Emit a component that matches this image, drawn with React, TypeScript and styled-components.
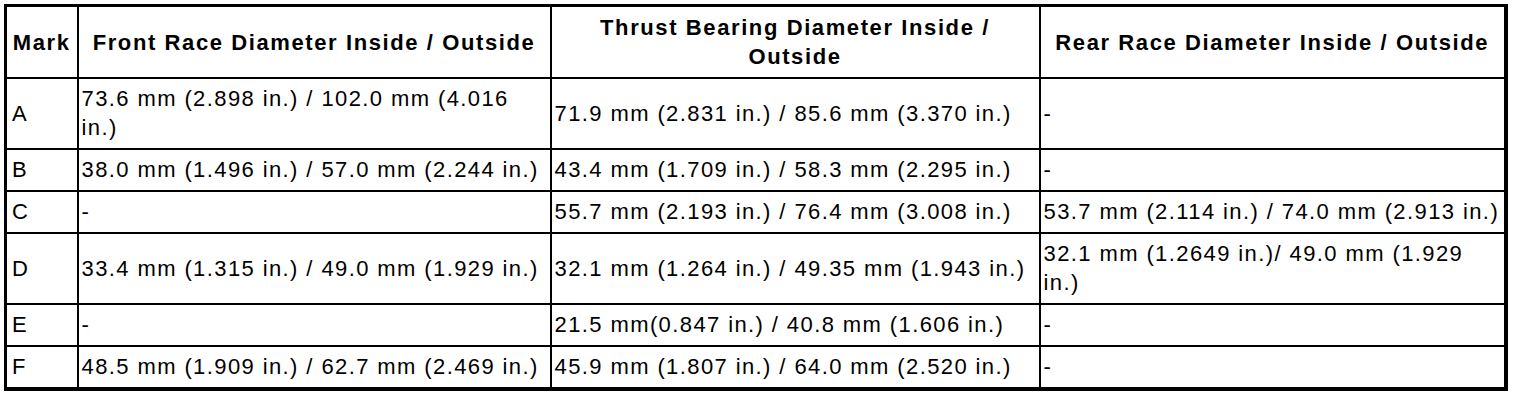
import React from "react";
import styled, { createGlobalStyle } from "styled-components";

const GlobalStyle = createGlobalStyle`
  html, body {
    margin: 0;
    padding: 0;
    background: #ffffff;
  }
  body {
    font-family: "Liberation Sans", Arial, Helvetica, sans-serif;
    color: #000000;
  }
`;

const Page = styled.div`
  padding: 4px;
  width: 1504px;
`;

const Table = styled.table`
  width: 1504px;
  table-layout: fixed;
  border-collapse: collapse;
  border: 3px solid #000;
  border-right-width: 4px;
  border-bottom-width: 4px;
  font-family: "Liberation Sans", Arial, Helvetica, sans-serif;
  font-size: 22px;
  letter-spacing: 1.4px;
  line-height: 29px;
  color: #000;
`;

const HeadCell = styled.th`
  border: 2px solid #000;
  padding: 6px 4px;
  font-weight: 700;
  letter-spacing: 1.6px;
  text-align: center;
  vertical-align: middle;
`;

const Cell = styled.td`
  border: 2px solid #000;
  padding: 5px 3px 6px 3px;
  text-align: left;
  vertical-align: middle;
  font-weight: 400;
`;

const MarkCell = styled(Cell)`
  padding-left: 5px;
`;

type Row = { mark: string; front: string; thrust: string; rear: string };

const rows: Row[] = [
  {
    mark: "A",
    front: "73.6 mm (2.898 in.) / 102.0 mm (4.016 in.)",
    thrust: "71.9 mm (2.831 in.) / 85.6 mm (3.370 in.)",
    rear: "-",
  },
  {
    mark: "B",
    front: "38.0 mm (1.496 in.) / 57.0 mm (2.244 in.)",
    thrust: "43.4 mm (1.709 in.) / 58.3 mm (2.295 in.)",
    rear: "-",
  },
  {
    mark: "C",
    front: "-",
    thrust: "55.7 mm (2.193 in.) / 76.4 mm (3.008 in.)",
    rear: "53.7 mm (2.114 in.) / 74.0 mm (2.913 in.)",
  },
  {
    mark: "D",
    front: "33.4 mm (1.315 in.) / 49.0 mm (1.929 in.)",
    thrust: "32.1 mm (1.264 in.) / 49.35 mm (1.943 in.)",
    rear: "32.1 mm (1.2649 in.)/ 49.0 mm (1.929 in.)",
  },
  {
    mark: "E",
    front: "-",
    thrust: "21.5 mm(0.847 in.) / 40.8 mm (1.606 in.)",
    rear: "-",
  },
  {
    mark: "F",
    front: "48.5 mm (1.909 in.) / 62.7 mm (2.469 in.)",
    thrust: "45.9 mm (1.807 in.) / 64.0 mm (2.520 in.)",
    rear: "-",
  },
];

export default function App() {
  return (
    <>
      <GlobalStyle />
      <Page>
        <Table>
          <colgroup>
            <col style={{ width: 72 }} />
            <col style={{ width: 473 }} />
            <col style={{ width: 489 }} />
            <col />
          </colgroup>
          <thead>
            <tr>
              <HeadCell>Mark</HeadCell>
              <HeadCell>Front Race Diameter Inside / Outside</HeadCell>
              <HeadCell>Thrust Bearing Diameter Inside / Outside</HeadCell>
              <HeadCell>Rear Race Diameter Inside / Outside</HeadCell>
            </tr>
          </thead>
          <tbody>
            {rows.map((r) => (
              <tr key={r.mark}>
                <MarkCell>{r.mark}</MarkCell>
                <Cell>{r.front}</Cell>
                <Cell>{r.thrust}</Cell>
                <Cell>{r.rear}</Cell>
              </tr>
            ))}
          </tbody>
        </Table>
      </Page>
    </>
  );
}
